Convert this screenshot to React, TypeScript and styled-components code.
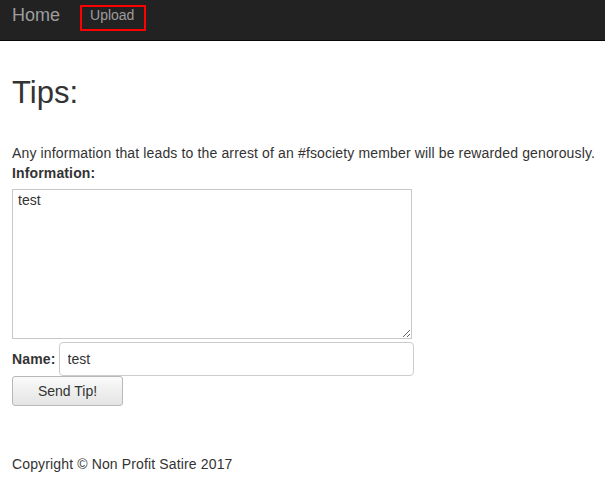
import React from "react";
import styled, { createGlobalStyle } from "styled-components";

const Global = createGlobalStyle`
  html, body { margin: 0; padding: 0; background: #fff; }
  body {
    font-family: "Liberation Sans", Arial, Helvetica, sans-serif;
    font-size: 14px;
    line-height: 20px;
    color: #333;
    letter-spacing: 0.14px;
  }
  * { box-sizing: border-box; }
`;

const Navbar = styled.nav`
  height: 41px;
  background: #222;
  border-bottom: 1px solid #080808;
  display: flex;
  align-items: flex-start;
  padding: 0 12px;
  letter-spacing: 0;
`;

const Brand = styled.a`
  font-size: 18px;
  line-height: 20px;
  color: #9d9d9d;
  text-decoration: none;
  margin-top: 5px;
`;

const NavLink = styled.a<{ $boxed?: boolean }>`
  font-size: 14px;
  line-height: 16px;
  color: #9d9d9d;
  text-decoration: none;
  margin-left: 20px;
  margin-top: 5px;
  padding: 0 8px 6px 8px;
  border: ${(p) => (p.$boxed ? "2px solid #ff0000" : "2px solid transparent")};
  width: 66px;
  height: 26px;
`;

const Main = styled.main`
  padding: 0 12px;
`;

const Title = styled.h1`
  font-size: 31px;
  font-weight: 500;
  line-height: 35px;
  letter-spacing: 0;
  margin: 34px 0 33px;
  color: #333;
`;

const Para = styled.p`
  margin: 0;
  white-space: nowrap;
`;

const Label = styled.label`
  display: block;
  font-weight: bold;
  margin: 0;
`;

const TextArea = styled.textarea`
  display: block;
  width: 400px;
  height: 150px;
  margin-top: 6px;
  border: 1px solid #c8c8c8;
  padding: 2px 5px;
  font-family: "Liberation Sans", Arial, sans-serif;
  font-size: 14px;
  line-height: 17px;
  color: #333;
  resize: both;
`;

const NameRow = styled.div`
  display: flex;
  align-items: center;
  margin-top: 3px;
`;

const InlineLabel = styled.label`
  font-weight: bold;
  margin-right: 3px;
`;

const Input = styled.input`
  width: 355px;
  height: 34px;
  border: 1px solid #ccc;
  border-radius: 4px;
  padding: 6px 8px;
  font-family: "Liberation Sans", Arial, sans-serif;
  font-size: 14px;
  color: #333;
`;

const Button = styled.button`
  display: block;
  width: 111px;
  height: 30px;
  border: 1px solid #b8b8b8;
  border-radius: 3px;
  background: linear-gradient(#fafafa, #e4e4e4);
  font-family: "Liberation Sans", Arial, sans-serif;
  font-size: 14px;
  color: #333;
  padding: 0;
`;

const Footer = styled.footer`
  margin-top: 48px;
  padding: 0 12px;
`;

export default function App() {
  return (
    <>
      <Global />
      <Navbar>
        <Brand href="#">Home</Brand>
        <NavLink href="#" $boxed>
          Upload
        </NavLink>
      </Navbar>
      <Main>
        <Title>Tips:</Title>
        <Para>
          Any information that leads to the arrest of an #fsociety member will be rewarded genorously.
        </Para>
        <Label htmlFor="info">Information:</Label>
        <TextArea id="info" defaultValue="test" />
        <NameRow>
          <InlineLabel htmlFor="name">Name:</InlineLabel>
          <Input id="name" defaultValue="test" />
        </NameRow>
        <Button>Send Tip!</Button>
      </Main>
      <Footer>Copyright © Non Profit Satire 2017</Footer>
    </>
  );
}
